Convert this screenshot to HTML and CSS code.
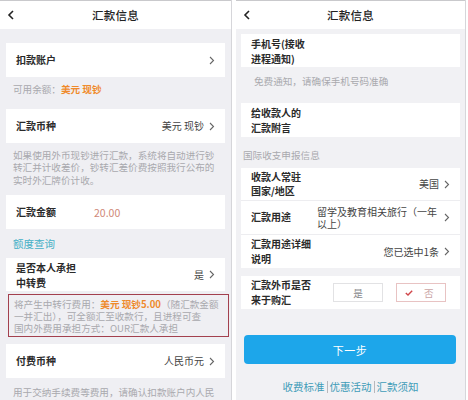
FILE: index.html
```html
<!DOCTYPE html>
<html lang="zh-CN">
<head>
<meta charset="utf-8">
<title>汇款信息</title>
<link rel="stylesheet" href="styles.css">
</head>
<body>
<div class="screen">
  <section class="phone phone-left">
    <header class="nav">
      <svg class="back" width="8" height="10" viewBox="0 0 8 10"><polyline points="6,1 2,5 6,9" fill="none" stroke="#222" stroke-width="1.6"/></svg>
      <h1>汇款信息</h1>
      <span></span>
    </header>
    <div class="card row first">
      <span class="label">扣款账户</span>
      <span class="value"><svg class="chev" width="6" height="9" viewBox="0 0 6 9"><polyline points="1,1 4.5,4.5 1,8" fill="none" stroke="#666" stroke-width="1.1"/></svg></span>
    </div>
    <p class="note note-balance">可用余额：<em>美元 现钞</em></p>
    <div class="card row">
      <span class="label">汇款币种</span>
      <span class="value">美元 现钞<svg class="chev" width="6" height="9" viewBox="0 0 6 9"><polyline points="1,1 4.5,4.5 1,8" fill="none" stroke="#666" stroke-width="1.1"/></svg></span>
    </div>
    <p class="note note-cash">如果使用外币现钞进行汇款，系统将自动进行钞<br>转汇并计收差价，钞转汇差价费按照我行公布的<br>实时外汇牌价计收。</p>
    <div class="card row amount-row">
      <span class="label">汇款金额</span>
      <span class="amount">20.00</span>
    </div>
    <a class="link-quota">额度查询</a>
    <div class="card row tall">
      <span class="label">是否本人承担<br>中转费</span>
      <span class="value">是<svg class="chev" width="6" height="9" viewBox="0 0 6 9"><polyline points="1,1 4.5,4.5 1,8" fill="none" stroke="#666" stroke-width="1.1"/></svg></span>
    </div>
    <p class="highlight">将产生中转行费用：<strong>美元 现钞5.00</strong>（随汇款金额<br>一并汇出），可全额汇至收款行，且进程可查<br>国内外费用承担方式：OUR汇款人承担</p>
    <div class="card row pay-row">
      <span class="label">付费币种</span>
      <span class="value">人民币元<svg class="chev" width="6" height="9" viewBox="0 0 6 9"><polyline points="1,1 4.5,4.5 1,8" fill="none" stroke="#666" stroke-width="1.1"/></svg></span>
    </div>
    <p class="note note-fee">用于交纳手续费等费用，请确认扣款账户内人民<br>币元资金充足。</p>
  </section>

  <section class="phone phone-right">
    <header class="nav">
      <svg class="back" width="8" height="10" viewBox="0 0 8 10"><polyline points="6,1 2,5 6,9" fill="none" stroke="#222" stroke-width="1.6"/></svg>
      <h1>汇款信息</h1>
      <span></span>
    </header>
    <div class="card row r-first">
      <span class="label">手机号(接收<br>进程通知)</span>
    </div>
    <p class="note note-phone">免费通知，请确保手机号码准确</p>
    <div class="card row r-msg">
      <span class="label">给收款人的<br>汇款附言</span>
    </div>
    <p class="section-title">国际收支申报信息</p>
    <div class="card group">
      <div class="row g-row g1">
        <span class="label">收款人常驻<br>国家/地区</span>
        <span class="value">美国<svg class="chev" width="6" height="9" viewBox="0 0 6 9"><polyline points="1,1 4.5,4.5 1,8" fill="none" stroke="#666" stroke-width="1.1"/></svg></span>
      </div>
      <div class="row g-row g2">
        <span class="label">汇款用途</span>
        <span class="value"><span class="purpose">留学及教育相关旅行（一年<br>以上）</span><svg class="chev" width="6" height="9" viewBox="0 0 6 9"><polyline points="1,1 4.5,4.5 1,8" fill="none" stroke="#666" stroke-width="1.1"/></svg></span>
      </div>
      <div class="row g-row g3">
        <span class="label">汇款用途详细<br>说明</span>
        <span class="value">您已选中1条<svg class="chev" width="6" height="9" viewBox="0 0 6 9"><polyline points="1,1 4.5,4.5 1,8" fill="none" stroke="#666" stroke-width="1.1"/></svg></span>
      </div>
    </div>
    <div class="card row r-buy">
      <span class="label">汇款外币是否<br>来于购汇</span>
      <div class="choices">
        <span class="choice">是</span>
        <span class="choice selected"><svg class="check" width="8" height="6" viewBox="0 0 8 6"><polyline points="0.8,3 3,5 7.2,0.8" fill="none" stroke="#d0464a" stroke-width="1.4"/></svg>否</span>
      </div>
    </div>
    <button class="next">下一步</button>
    <nav class="links"><a>收费标准</a><i></i><a>优惠活动</a><i></i><a>汇款须知</a></nav>
  </section>
</div>
</body>
</html>
```

FILE: styles.css
```css
* { box-sizing: border-box; margin: 0; padding: 0; }
html, body { width: 468px; height: 400px; overflow: hidden; background: #fff; }
body { font-family: "Noto Sans CJK SC", "Noto Sans", sans-serif; color: #2a2a2a; }

.screen { display: flex; height: 400px; }

.phone {
  height: 400px;
  overflow: hidden;
  display: flex;
  flex-direction: column;
  background: #efeff3;
  border-right: 1px solid #d6d6da;
}
.phone-left { width: 232px; }
.phone-right { width: 230px; margin-left: 4px; background: #f1f1f4; }

.nav {
  flex: none;
  height: 29px;
  background: #fff;
  border-top: 1px solid #c9c9cc;
  display: grid;
  grid-template-columns: 30px 1fr 30px;
  align-items: center;
}
.nav .back { margin-left: 7px; }
.nav h1 {
  font-size: 11.5px;
  font-weight: 500;
  text-align: center;
  color: #222;
  letter-spacing: 0.2px;
}

.card { background: #fff; flex: none; }
.row {
  display: flex;
  align-items: center;
  justify-content: space-between;
  padding: 0 10px;
}
.phone-left .card { margin: 0 6px; }
.phone-right .card { margin: 0 5px 0 5px; }

.label {
  font-size: 10px;
  font-weight: 600;
  line-height: 14.5px;
  color: #2a2a2a;
}
.value {
  display: flex;
  align-items: center;
  font-size: 10px;
  color: #444;
  line-height: 12px;
}
.chev { margin-left: 5px; }

.first { margin-top: 14px !important; height: 34px; }
.note {
  font-size: 9.6px;
  line-height: 12.3px;
  color: #a9a9ae;
  padding: 0 13px;
  flex: none;
}
.note em { font-style: normal; color: #f08a2a; font-weight: 600; }
.note-balance { padding-top: 6px; height: 32px; }
.phone-left .row:not(.first):not(.tall) { height: 34px; }
.note-cash { padding-top: 6px; height: 52px; }
.amount-row { justify-content: flex-start; }
.phone-left .amount-row { height: 33px; }
.amount { margin-left: 38px; font-size: 10.5px; color: #cf8878; }
.link-quota {
  display: block;
  flex: none;
  font-size: 10.5px;
  line-height: 14px;
  color: #44afc6;
  padding: 8px 13px 7px;
}
.phone-left .tall { height: 33px; }
.tall .label { line-height: 15px; }
.highlight {
  flex: none;
  margin: 3px 2px 0 8px;
  height: 43px;
  border: 1.5px solid #a3404e;
  padding: 2.5px 4px 0 5px;
  font-size: 9.6px;
  line-height: 12px;
  color: #a9a9ae;
  white-space: nowrap;
}
.highlight strong { color: #ee8a2c; font-weight: 700; }
.phone-left .pay-row { margin-top: 7px; height: 32px; }
.note-fee { padding-top: 8px; }

/* right */
.r-first { margin-top: 5px !important; height: 33px; padding-top: 2px; }
.note-phone { padding: 8px 15px 0 18px; height: 36px; }
.r-msg { height: 34px; padding-top: 1px; }
.section-title {
  flex: none;
  height: 31px;
  padding: 12px 0 0 7px;
  font-size: 9.6px;
  line-height: 12px;
  color: #a9a9ae;
}
.group { display: flex; flex-direction: column; }
.g-row { border-top: 1px solid #ededf0; }
.g-row:first-child { border-top: none; }
.g1 { height: 32px; }
.g2 { height: 34px; }
.g3 { height: 34px; }
.purpose { width: 122px; font-size: 10px; line-height: 12px; color: #444; }
.r-buy { margin-top: 8px !important; height: 33px; }
.choices { display: flex; gap: 13px; margin-right: 4px; }
.choice {
  width: 50px;
  height: 19px;
  border: 1px solid #e2e2e4;
  background: #fff;
  display: flex;
  align-items: center;
  justify-content: center;
  font-size: 9.6px;
  color: #8a8a8e;
}
.choice.selected {
  border-color: #e8c3c3;
  color: #caa4a4;
  justify-content: flex-start;
  padding-left: 8px;
}
.check { margin-right: 11px; }

.next {
  flex: none;
  margin: 26px 9px 0 8px;
  height: 29px;
  border: none;
  border-radius: 4px;
  background: #1da6ea;
  color: #fff;
  font-family: inherit;
  font-size: 11px;
  letter-spacing: 0.5px;
}
.links {
  flex: none;
  display: flex;
  justify-content: center;
  align-items: center;
  padding-top: 16px;
  font-size: 10.5px;
  line-height: 14px;
  color: #3f9cb8;
}
.links i { width: 1px; height: 12px; background: #b8b8bc; margin: 0 2px; }
```
